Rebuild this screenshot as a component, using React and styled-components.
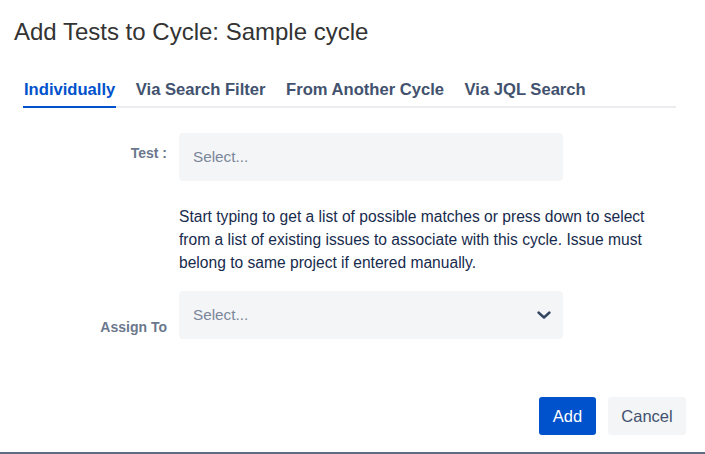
import React from "react";
import styled, { createGlobalStyle } from "styled-components";

const Global = createGlobalStyle`
  html, body { margin: 0; padding: 0; background: #fff; }
  body { font-family: "Liberation Sans", Arial, sans-serif; }
  * { box-sizing: border-box; }
`;

const Dialog = styled.div`
  width: 705px;
  height: 454px;
  display: flex;
  flex-direction: column;
  border-bottom: 2px solid #5E6C84;
  background: #fff;
`;

const Title = styled.h1`
  margin: 18px 0 0 14px;
  font-size: 24px;
  line-height: 28px;
  font-weight: 400;
  color: #333333;
`;

const Body = styled.div`
  padding: 0 29px 0 23px;
  flex: 1;
  display: flex;
  flex-direction: column;
`;

const TabList = styled.div`
  margin-top: 34px;
  display: flex;
  gap: 18.5px;
  border-bottom: 2px solid #EBECF0;
`;

const Tab = styled.div`
  padding: 0 1px 6px;
  margin-bottom: -2px;
  font-size: 16.6px;
  line-height: 20px;
  font-weight: 700;
  color: ${(p) => (p.$active ? "#0052CC" : "#42526E")};
  border-bottom: 2px solid ${(p) => (p.$active ? "#0052CC" : "transparent")};
`;

const Row = styled.div`
  display: grid;
  grid-template-columns: 144px 384px;
  column-gap: 12px;
  margin-top: ${(p) => p.$top}px;
`;

const Label = styled.label`
  font-size: 14px;
  line-height: 16px;
  font-weight: 700;
  color: #6B778C;
  text-align: right;
  align-self: ${(p) => (p.$bottom ? "end" : "start")};
  padding-top: ${(p) => (p.$bottom ? 0 : 12)}px;
  padding-bottom: ${(p) => (p.$bottom ? 4 : 0)}px;
`;

const Field = styled.div`
  height: 48px;
  border-radius: 4px;
  background: #F4F5F7;
  display: flex;
  align-items: center;
  justify-content: space-between;
  padding: 0 11px 0 14px;
  font-size: 15.3px;
  color: #7A869A;
`;

const Help = styled.p`
  grid-column: 2;
  margin: 0;
  width: 480px;
  font-size: 15.6px;
  line-height: 23px;
  color: #172B4D;
`;

const Footer = styled.div`
  margin-top: auto;
  margin-bottom: 17px;
  margin-right: -10px;
  display: flex;
  justify-content: flex-end;
  gap: 12px;
`;

const Button = styled.button`
  height: 38px;
  width: ${(p) => (p.$primary ? 57 : 78)}px;
  padding: 0;
  border: none;
  border-radius: 3px;
  font-family: inherit;
  font-size: 16.5px;
  background: ${(p) => (p.$primary ? "#0052CC" : "#F4F5F7")};
  color: ${(p) => (p.$primary ? "#FFFFFF" : "#42526E")};
`;

const Chevron = () => (
  <svg width="16" height="16" viewBox="0 0 16 16">
    <path d="M2.5 5.5 L8 10.5 L13.5 5.5" fill="none" stroke="#344563" strokeWidth="2.4" strokeLinecap="round" strokeLinejoin="round" />
  </svg>
);

export default function App() {
  return (
    <>
      <Global />
      <Dialog>
        <Title>Add Tests to Cycle: Sample cycle</Title>
        <Body>
          <TabList>
            <Tab $active>Individually</Tab>
            <Tab>Via Search Filter</Tab>
            <Tab>From Another Cycle</Tab>
            <Tab>Via JQL Search</Tab>
          </TabList>
          <Row $top={25}>
            <Label>Test :</Label>
            <Field>Select...</Field>
          </Row>
          <Row $top={24}>
            <Help>
              Start typing to get a list of possible matches or press down to select from a list of existing issues to associate with this cycle. Issue must belong to same project if entered manually.
            </Help>
          </Row>
          <Row $top={17}>
            <Label $bottom>Assign To</Label>
            <Field>
              Select...
              <Chevron />
            </Field>
          </Row>
          <Footer>
            <Button $primary>Add</Button>
            <Button>Cancel</Button>
          </Footer>
        </Body>
      </Dialog>
    </>
  );
}
